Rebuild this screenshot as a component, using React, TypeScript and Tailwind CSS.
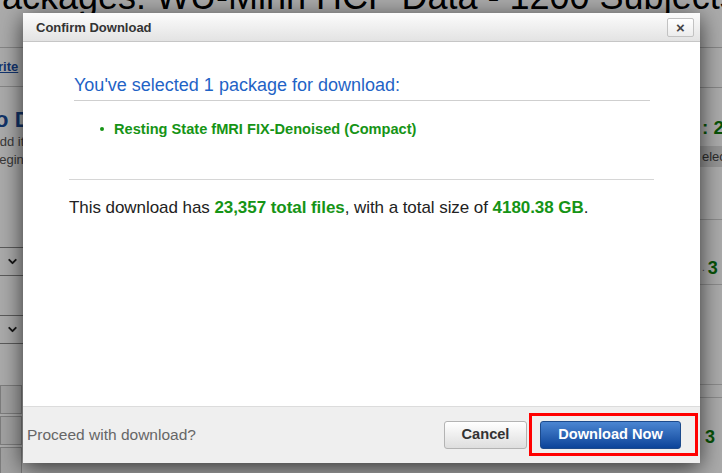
import { ChevronDown } from 'lucide-react'

// page that sits behind the modal (only strips of it show)
const LeftColumn = () => (
  <div className="w-[23px] shrink-0 overflow-hidden whitespace-nowrap">
    <div className="h-[33px] border-b border-[#c8c8c8]" />
    <div className="h-[39px] flex items-center border-b border-[#c8c8c8]">
      <span className="-ml-[14px] text-[13px] font-bold text-[#1b4fa8] underline">Write</span>
    </div>
    <div className="pt-[20px] -ml-[22px] text-[22px] leading-[26px] font-bold text-[#1a4c9c]">Go Download</div>
    <div className="-ml-[9px] text-[13px] leading-[18px] text-[#555]">Add it</div>
    <div className="-ml-[8px] text-[13px] leading-[18px] text-[#555]">begin</div>
    <div className="mt-[78px] h-[29px] flex items-center border-y border-[#888]">
      <ChevronDown size={13} strokeWidth={3.5} className="ml-[6px] text-[#222]" />
    </div>
    <div className="mt-[39px] h-[29px] flex items-center border-y border-[#888]">
      <ChevronDown size={13} strokeWidth={3.5} className="ml-[6px] text-[#222]" />
    </div>
    <div className="mt-[41px] flex flex-col gap-[2px]">
      <div className="h-[29px] w-[22px] border border-[#bbb] bg-[#f2f2f2]" />
      <div className="h-[29px] w-[22px] border border-[#bbb] bg-[#f2f2f2]" />
      <div className="h-[29px] w-[22px] border border-[#bbb] bg-[#f2f2f2]" />
    </div>
  </div>
)

const RightColumn = () => (
  <div className="w-[22px] shrink-0 overflow-hidden whitespace-nowrap">
    <div className="h-[33px] border-b border-[#c8c8c8]" />
    <div className="h-[40px] border-b border-[#c8c8c8]" />
    <div className="mt-[28px] pl-[2px] text-[19px] leading-[24px] font-bold text-[#0c7d0c]">: 23,357</div>
    <div className="mt-[6px] h-[21px] pl-[2px] flex items-center bg-[#dedede] text-[13px] text-[#444]">elected</div>
    <div className="h-[53px] border-b border-[#d0d0d0]" />
    <div className="h-[65px] border-b border-[#d0d0d0] pt-[38px] flex text-[18px] leading-[20px] font-bold text-[#0c7d0c]">
      <span className="text-[10px] font-normal text-[#666] pl-[2px] pr-[3px]">.</span>
      <span>3</span>
    </div>
    <div className="h-[100px] border-b border-[#d0d0d0]" />
    <div className="h-[13px] border-b border-[#d0d0d0]" />
    <div className="pt-[29px] pl-[5px] text-[18px] leading-[20px] font-bold text-[#0c7d0c]">3</div>
  </div>
)

const BackgroundPage = () => (
  <div className="flex flex-col">
    <div className="-mt-[21px] -ml-[22px] h-[36px] whitespace-nowrap text-[36px] leading-[36px] text-black">
      Packages: WU-Minn HCP Data - 1200 Subjects
    </div>
    <div className="flex">
      <LeftColumn />
      <div className="w-[677px] shrink-0" />
      <RightColumn />
    </div>
  </div>
)

const ConfirmDialog = () => (
  <div className="absolute left-[23px] top-[13px] w-[677px] h-[450px] flex flex-col bg-white shadow-[0_5px_22px_rgba(0,0,0,0.7)]">
    <div className="h-[29px] shrink-0 flex items-center justify-between pl-[13px] pr-[6px] pt-[1px] border-b border-[#c6c6c6] bg-gradient-to-b from-[#fcfcfc] to-[#e3e3e3]">
      <span className="text-[13px] font-bold text-[#333]">Confirm Download</span>
      <button className="w-[27px] h-[19px] flex items-center justify-center rounded-[2px] border border-[#c2c2c2] bg-gradient-to-b from-white to-[#ececec] text-[15px] leading-none font-bold text-[#444]">
        ×
      </button>
    </div>

    <div className="flex-1 flex flex-col">
      <div className="ml-[51px] w-[576px] pt-[32px] pb-[4px] border-b border-[#cfcfcf] text-[18px] leading-[22px] text-[#1f63c6]">
        You've selected 1 package for download:
      </div>
      <ul className="ml-[77px] mt-[19px]">
        <li className="flex items-center text-[14.6px] leading-[18px] font-bold text-[#169416]">
          <span className="w-[4px] h-[4px] mr-[10px] rounded-full bg-[#169416]" />
          Resting State fMRI FIX-Denoised (Compact)
        </li>
      </ul>
      <div className="ml-[46px] w-[585px] mt-[41px] border-t border-[#d6d6d6]" />
      <p className="ml-[46px] mt-[18px] text-[17px] leading-[20px] tracking-[-0.06px] text-[#222]">
        This download has <b className="text-[#169416]">23,357 total files</b>, with a total size of{' '}
        <b className="text-[#169416]">4180.38 GB</b>.
      </p>
    </div>

    <div className="h-[57px] shrink-0 flex items-center justify-between pl-[4px] pr-[19px] border-t border-[#dcdcdc] bg-[#efefef]">
      <span className="text-[15.5px] text-[#666]">Proceed with download?</span>
      <div className="flex gap-[13px]">
        <button className="w-[83px] h-[28px] rounded-[3px] border border-[#b3b3b3] bg-gradient-to-b from-white to-[#dedede] text-[14.6px] font-bold text-[#333]">
          Cancel
        </button>
        <button className="w-[141px] h-[28px] rounded-[3px] border border-[#1c4a8c] bg-gradient-to-b from-[#4b86d2] to-[#0b4499] text-[14.6px] font-bold text-white">
          Download Now
        </button>
      </div>
    </div>
  </div>
)

export default function App() {
  return (
    <div className="relative w-[722px] h-[473px] overflow-hidden bg-white font-['Liberation_Sans',Arial,sans-serif]">
      <BackgroundPage />
      <div className="absolute inset-0 bg-black/[0.33]" />
      <ConfirmDialog />
      {/* annotation box round the primary button */}
      <div className="absolute left-[529px] top-[413px] w-[169px] h-[43px] border-[3px] border-[#ff0000]" />
    </div>
  )
}
